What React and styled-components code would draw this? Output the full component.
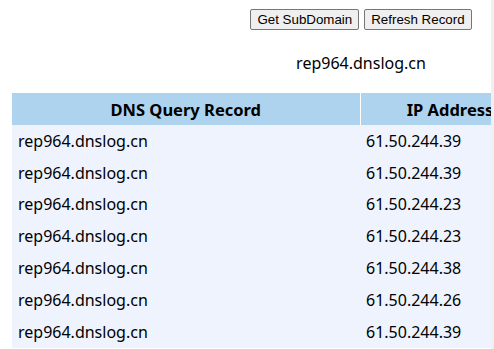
import styled, { createGlobalStyle } from "styled-components";

const records = [
  ["rep964.dnslog.cn", "61.50.244.39"],
  ["rep964.dnslog.cn", "61.50.244.39"],
  ["rep964.dnslog.cn", "61.50.244.23"],
  ["rep964.dnslog.cn", "61.50.244.23"],
  ["rep964.dnslog.cn", "61.50.244.38"],
  ["rep964.dnslog.cn", "61.50.244.26"],
  ["rep964.dnslog.cn", "61.50.244.39"],
];

export default function App() {
  return (
    <>
      <GlobalStyle />
      <Screen>
        <Page>
          <Content>
            <Toolbar>
              <Button>Get SubDomain</Button>
              <Button>Refresh Record</Button>
            </Toolbar>
            <Domain>rep964.dnslog.cn</Domain>
            <Table>
              <thead>
                <tr>
                  <Th $width={348}>DNS Query Record</Th>
                  <Th $width={180}>IP Address</Th>
                  <Th>Created Time</Th>
                </tr>
              </thead>
              <tbody>
                {records.map((r, i) => (
                  <tr key={i}>
                    <Td>{r[0]}</Td>
                    <Td>{r[1]}</Td>
                    <Td>2024-05-12 10:2{i}:31</Td>
                  </tr>
                ))}
              </tbody>
            </Table>
          </Content>
        </Page>
        <Scrollbar />
      </Screen>
    </>
  );
}

const GlobalStyle = createGlobalStyle`
  html, body {
    margin: 0;
    padding: 0;
    background: #ffffff;
    overflow: hidden;
  }
  body {
    font-family: "Noto Sans", "Open Sans", sans-serif;
  }
`;

const Screen = styled.div`
  display: flex;
  width: 494px;
  height: 349px;
  overflow: hidden;
`;

const Page = styled.div`
  flex: 0 0 491px;
  overflow: hidden;
`;

const Scrollbar = styled.div`
  flex: 0 0 3px;
  background: #f0f0f0;
`;

const Content = styled.div`
  width: 698px;
  margin-left: 12px;
  padding-top: 9px;
`;

const Toolbar = styled.div`
  display: flex;
  justify-content: center;
  gap: 5px;
`;

const Button = styled.button`
  height: 21px;
  padding: 0 6px;
  font-family: "Liberation Sans", Arial, sans-serif;
  font-size: 13.33px;
  color: #000;
  background: #efefef;
  border: 1px solid #767676;
  border-radius: 2px;
`;

const Domain = styled.p`
  margin: 22px 0 0;
  height: 22px;
  line-height: 22px;
  text-align: center;
  font-size: 16px;
  color: #000;
`;

const Table = styled.table`
  margin-top: 19px;
  width: 698px;
  border-collapse: collapse;
  table-layout: fixed;
`;

const Th = styled.th`
  box-sizing: border-box;
  width: ${(p) => (p.$width ? `${p.$width}px` : "auto")};
  height: 32px;
  padding: 0 6px;
  background: #aed3ef;
  border-right: 1px solid #ffffff;
  font-size: 16.5px;
  font-weight: 700;
  color: #000;
  text-align: center;
  white-space: nowrap;
`;

const Td = styled.td`
  box-sizing: border-box;
  height: 31.8px;
  padding: 0 6px;
  background: #eef3fe;
  font-size: 16px;
  color: #000;
  white-space: nowrap;
`;
